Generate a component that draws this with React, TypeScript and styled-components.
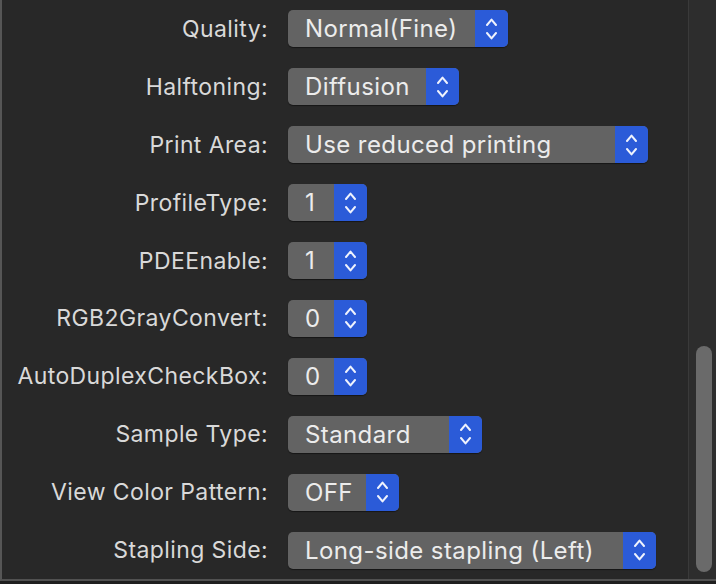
import styled, { createGlobalStyle } from 'styled-components';

const GlobalStyle = createGlobalStyle`
  html, body {
    margin: 0;
    padding: 0;
    background: #1f1f1f;
  }
  body {
    font-family: Inter, 'Liberation Sans', sans-serif;
  }
  * {
    box-sizing: border-box;
  }
`;

const Window = styled.div`
  width: 716px;
  height: 584px;
  display: flex;
  flex-direction: column;
  overflow: hidden;
`;

const Body = styled.div`
  flex: 1;
  display: flex;
  min-height: 0;
  border-left: 2px solid #565656;
  border-bottom: 2px solid #515151;
  background: #282828;
`;

const BottomGap = styled.div`
  height: 3px;
  background: #1f1f1f;
`;

const Form = styled.div`
  flex: 1;
  display: flex;
  flex-direction: column;
`;

const Row = styled.div`
  height: 58px;
  display: grid;
  grid-template-columns: 266px auto;
  column-gap: 20px;
  align-items: center;
`;

const Label = styled.div`
  text-align: right;
  color: #d9d9d9;
  font-size: 23px;
  letter-spacing: 0.4px;
  white-space: nowrap;
`;

const Popup = styled.div<{ $w: number }>`
  width: ${(p) => p.$w}px;
  height: 37px;
  display: flex;
  border-radius: 5px;
  overflow: hidden;
  background: #636363;
  box-shadow: 0 1px 1px rgba(0, 0, 0, 0.45);
`;

const Value = styled.div`
  flex: 1;
  display: flex;
  align-items: center;
  padding-left: 17px;
  color: #ececec;
  font-size: 24px;
  letter-spacing: 0.4px;
  white-space: nowrap;
`;

const Stepper = styled.div`
  width: 33px;
  display: flex;
  align-items: center;
  justify-content: center;
  background: #2b5bd8;
`;

const Scrollbar = styled.div`
  width: 28px;
  border-left: 1px solid #3a3a3a;
  background: #2d2d2d;
  display: flex;
  flex-direction: column;
  justify-content: flex-end;
  padding: 0 4px 7px 7px;
`;

const Thumb = styled.div`
  height: 226px;
  border-radius: 8px;
  background: #6a6a6a;
`;

const Chevrons = () => (
  <svg width="11" height="24" viewBox="0 0 11 24" fill="none">
    <path
      d="M1 8 L5.5 2.6 L10 8 M1 16 L5.5 21.4 L10 16"
      stroke="#eef2fd"
      strokeWidth="2"
      strokeLinecap="round"
      strokeLinejoin="round"
    />
  </svg>
);

const rows = [
  { label: 'Quality:', value: 'Normal(Fine)', width: 220 },
  { label: 'Halftoning:', value: 'Diffusion', width: 171 },
  { label: 'Print Area:', value: 'Use reduced printing', width: 360 },
  { label: 'ProfileType:', value: '1', width: 79 },
  { label: 'PDEEnable:', value: '1', width: 79 },
  { label: 'RGB2GrayConvert:', value: '0', width: 79 },
  { label: 'AutoDuplexCheckBox:', value: '0', width: 79 },
  { label: 'Sample Type:', value: 'Standard', width: 194 },
  { label: 'View Color Pattern:', value: 'OFF', width: 111 },
  { label: 'Stapling Side:', value: 'Long-side stapling (Left)', width: 368 },
];

const App = () => (
  <>
    <GlobalStyle />
    <Window>
      <Body>
        <Form>
          {rows.map((r) => (
            <Row key={r.label}>
              <Label>{r.label}</Label>
              <Popup $w={r.width}>
                <Value>{r.value}</Value>
                <Stepper>
                  <Chevrons />
                </Stepper>
              </Popup>
            </Row>
          ))}
        </Form>
        <Scrollbar>
          <Thumb />
        </Scrollbar>
      </Body>
      <BottomGap />
    </Window>
  </>
);

export default App;
